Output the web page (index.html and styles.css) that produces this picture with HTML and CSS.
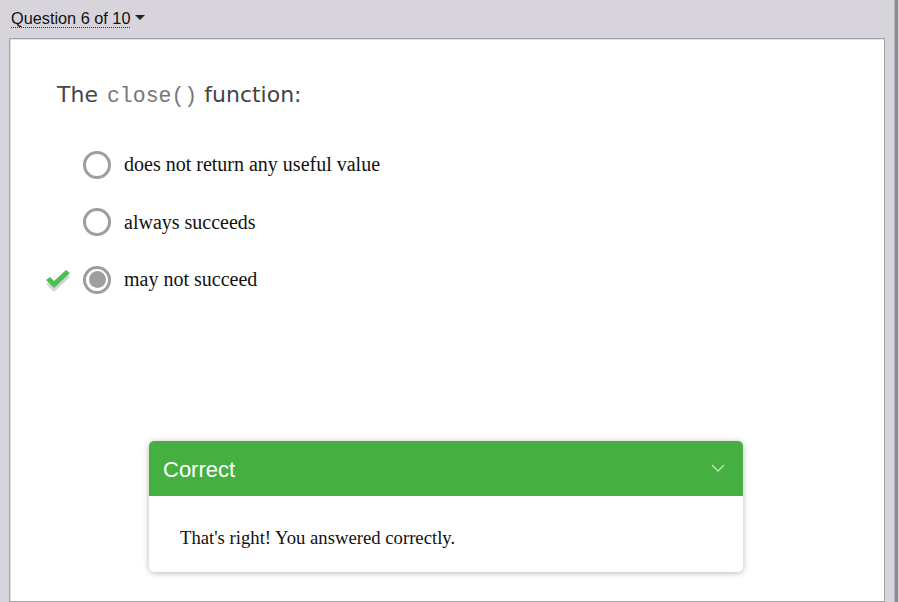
FILE: index.html
```html
<!DOCTYPE html>
<html>
<head>
<meta charset="utf-8">
<link rel="stylesheet" href="styles.css">
</head>
<body>
<div class="frame">
  <div class="main">
    <div class="topbar">
      <span class="qnum">Question 6 of 10</span>
      <span class="caret"></span>
    </div>
    <div class="card">
      <div class="question">The <code class="code">close()</code> function:</div>
      <ul class="options">
        <li class="option">
          <span class="mark"></span>
          <span class="radio"></span>
          <span class="label">does not return any useful value</span>
        </li>
        <li class="option">
          <span class="mark"></span>
          <span class="radio"></span>
          <span class="label">always succeeds</span>
        </li>
        <li class="option">
          <span class="mark">
            <svg width="26" height="22" viewBox="0 0 26 22">
              <path d="M1 12 L9 20 L25 5 L21 2 L9 13 L5 9 Z" fill="#d6d6d6" transform="translate(0,2)"/>
              <path d="M1 10 L9 18 L25 3 L21 0 L9 11 L5 7 Z" fill="#4cc04f"/>
            </svg>
          </span>
          <span class="radio selected"></span>
          <span class="label">may not succeed</span>
        </li>
      </ul>
      <div class="feedback">
        <div class="fb-head">
          <span class="fb-title">Correct</span>
          <svg class="chev" width="14" height="8" viewBox="0 0 14 8">
            <path d="M1 1 L7 7 L13 1" fill="none" stroke="#b9e3b6" stroke-width="1.5"/>
          </svg>
        </div>
        <div class="fb-body">That's right! You answered correctly.</div>
      </div>
    </div>
  </div>
  <div class="edge"></div>
</div>
</body>
</html>
```
FILE: styles.css
```css
html, body {
  margin: 0;
  padding: 0;
}
body {
  background: #d7d5db;
  width: 899px;
  height: 602px;
  overflow: hidden;
}
.frame {
  display: flex;
  height: 602px;
}
.main {
  width: 894px;
  display: flex;
  flex-direction: column;
}
.edge {
  width: 5px;
  background: #d7d5db;
  border-left: 1px solid #b9b8bd;
  box-shadow: inset 3px 0 0 #8c8b90;
  box-sizing: border-box;
}
.topbar {
  height: 38px;
  box-sizing: border-box;
  padding: 9px 0 0 11px;
  display: flex;
  align-items: flex-start;
  font-family: "Liberation Sans", Arial, sans-serif;
  font-size: 16.3px;
  color: #111;
}
.qnum {
  border-bottom: 1px dotted #333;
  line-height: 18px;
}
.caret {
  width: 0;
  height: 0;
  border-left: 5px solid transparent;
  border-right: 5px solid transparent;
  border-top: 5px solid #222;
  margin: 6px 0 0 5px;
}
.card {
  margin-left: 9px;
  width: 876px;
  flex: 1;
  background: #fff;
  border: 1px solid #a3a3a3;
  box-shadow: inset 1px 1px 0 #e2e2e2;
  box-sizing: border-box;
  display: flex;
  flex-direction: column;
}
.question {
  margin: 42px 0 0 47px;
  font-family: "DejaVu Sans", Verdana, sans-serif;
  font-size: 22px;
  color: #444;
  line-height: 28px;
}
.code {
  font-family: "Liberation Mono", "Courier New", monospace;
  font-size: 21.5px;
  color: #777;
  margin-left: 2px;
}
.options {
  list-style: none;
  margin: 40px 0 0 35px;
  padding: 0;
  display: flex;
  flex-direction: column;
  gap: 28.5px;
}
.option {
  display: flex;
  align-items: center;
  height: 29px;
}
.mark {
  width: 38px;
  display: flex;
  align-items: center;
  padding-top: 2px;
}
.radio {
  width: 28px;
  height: 28px;
  border: 3px solid #9e9e9e;
  border-radius: 50%;
  box-sizing: border-box;
  display: flex;
  align-items: center;
  justify-content: center;
}
.radio.selected::after {
  content: "";
  width: 17px;
  height: 17px;
  border-radius: 50%;
  background: #9e9e9e;
}
.label {
  margin-left: 13px;
  font-family: "Liberation Serif", "Times New Roman", serif;
  font-size: 20px;
  color: #111;
}
.feedback {
  margin: 147px 0 0 139px;
  width: 594px;
  background: #fff;
  border-radius: 5px;
  box-shadow: 0 1px 6px rgba(0,0,0,0.28);
  overflow: hidden;
}
.fb-head {
  height: 55px;
  background: #45b041;
  display: flex;
  align-items: center;
  justify-content: space-between;
  padding: 0 18px 0 14px;
}
.fb-title {
  font-family: "Liberation Sans", Arial, sans-serif;
  font-size: 22px;
  color: #fff;
  padding-top: 2px;
}
.chev {
  margin-top: -2px;
}
.fb-body {
  padding: 31px 31px 23px;
  font-family: "Liberation Serif", "Times New Roman", serif;
  font-size: 18.7px;
  color: #111;
  line-height: 22px;
}
```
